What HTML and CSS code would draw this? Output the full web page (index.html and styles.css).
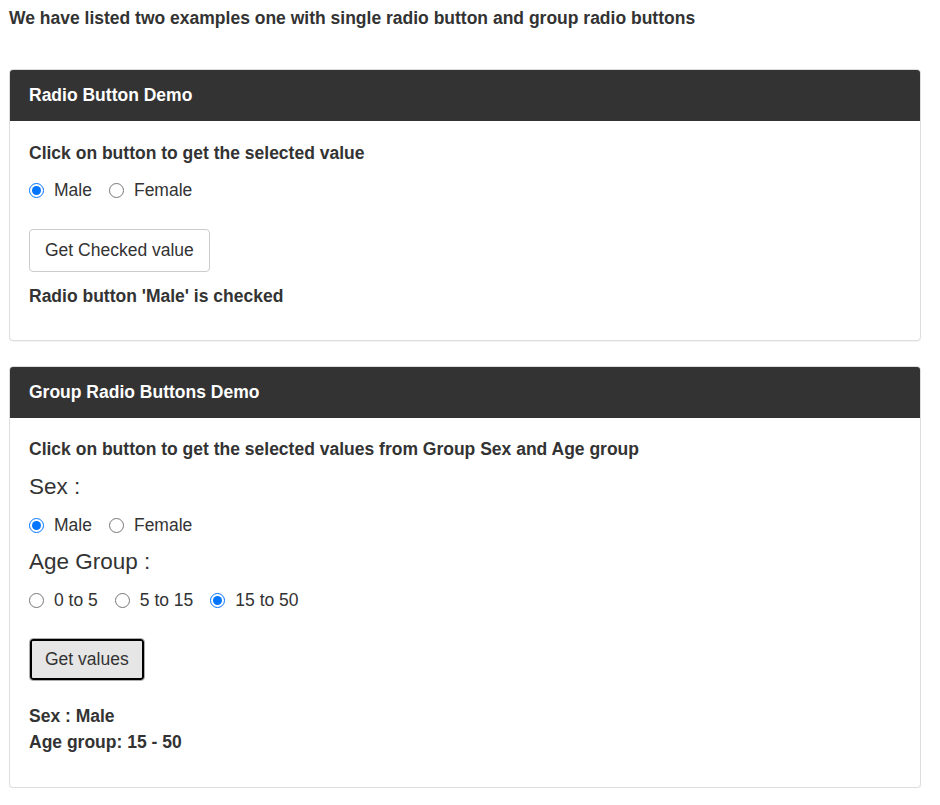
FILE: index.html
```html
<!DOCTYPE html>
<html>
<head>
<meta charset="utf-8">
<link rel="stylesheet" href="styles.css">
</head>
<body>
<div class="page">
  <p class="intro">We have listed two examples one with single radio button and group radio buttons</p>

  <div class="panel">
    <div class="panel-heading">Radio Button Demo</div>
    <div class="panel-body">
      <p class="bold">Click on button to get the selected value</p>
      <div class="radio-row row-1">
        <label class="opt"><input type="radio" name="opt1" checked><span>Male</span></label>
        <label class="opt"><input type="radio" name="opt1"><span>Female</span></label>
      </div>
      <button class="btn btn-1" type="button">Get Checked value</button>
      <p class="bold result-1">Radio button 'Male' is checked</p>
    </div>
  </div>

  <div class="panel panel-2">
    <div class="panel-heading">Group Radio Buttons Demo</div>
    <div class="panel-body body-2">
      <p class="bold">Click on button to get the selected values from Group Sex and Age group</p>
      <h4 class="group-title sex-title">Sex :</h4>
      <div class="radio-row row-sex">
        <label class="opt"><input type="radio" name="sex" checked><span>Male</span></label>
        <label class="opt"><input type="radio" name="sex"><span>Female</span></label>
      </div>
      <h4 class="group-title age-title">Age Group :</h4>
      <div class="radio-row row-age">
        <label class="opt"><input type="radio" name="age"><span>0 to 5</span></label>
        <label class="opt"><input type="radio" name="age"><span>5 to 15</span></label>
        <label class="opt"><input type="radio" name="age" checked><span>15 to 50</span></label>
      </div>
      <button class="btn btn-2" type="button">Get values</button>
      <p class="bold result-2">Sex : Male<br>Age group: 15 - 50</p>
    </div>
  </div>
</div>
</body>
</html>
```

FILE: styles.css
```css
html, body {
  margin: 0;
  padding: 0;
  background: #fff;
}
body {
  font-family: "Liberation Sans", Arial, sans-serif;
  font-size: 17.5px;
  color: #333;
}
.page {
  padding: 0 19px 0 9px;
}
.intro {
  margin: 6px 0 38px 0;
  line-height: 25px;
  font-weight: bold;
}
.panel {
  border: 1px solid #ddd;
  border-radius: 4px;
  background: #fff;
  box-shadow: 0 1px 1px rgba(0,0,0,0.05);
}
.panel-2 {
  margin-top: 25px;
}
.panel-heading {
  background: #333;
  color: #fff;
  font-weight: bold;
  line-height: 25px;
  padding: 13px 19px 13px 19px;
  border-radius: 3px 3px 0 0;
}
.panel-body {
  padding: 20px 19px 31px 19px;
}
.body-2 {
  padding-top: 19px;
  padding-bottom: 32px;
}
.bold {
  font-weight: bold;
  line-height: 25px;
  margin: 0;
}
.radio-row {
  display: flex;
  align-items: center;
  height: 25px;
  gap: 17px;
}
.row-1 { margin-top: 12px; }
.row-sex { margin-top: 14px; }
.row-age { margin-top: 14px; }
.opt {
  display: inline-flex;
  align-items: center;
  gap: 10px;
  line-height: 25px;
}
.opt input {
  margin: 0;
  width: 15px;
  height: 15px;
}
.group-title {
  font-size: 22.5px;
  font-weight: normal;
  line-height: 25px;
  margin: 0;
}
.sex-title { margin-top: 12px; }
.age-title { margin-top: 11px; }
.btn {
  display: block;
  font-family: "Liberation Sans", Arial, sans-serif;
  font-size: 17.5px;
  color: #333;
  line-height: 25px;
  padding: 8px 15px;
  border-radius: 4px;
  cursor: pointer;
}
.btn-1 {
  margin-top: 26px;
  background: #fff;
  border: 1px solid #ccc;
}
.btn-2 {
  margin-top: 25px;
  background: #e6e6e6;
  border: 1px solid #adadad;
  box-shadow: inset 0 0 0 2px #000;
}
.result-1 {
  margin-top: 12px;
}
.result-2 {
  margin-top: 22px;
  line-height: 26px;
}
```
